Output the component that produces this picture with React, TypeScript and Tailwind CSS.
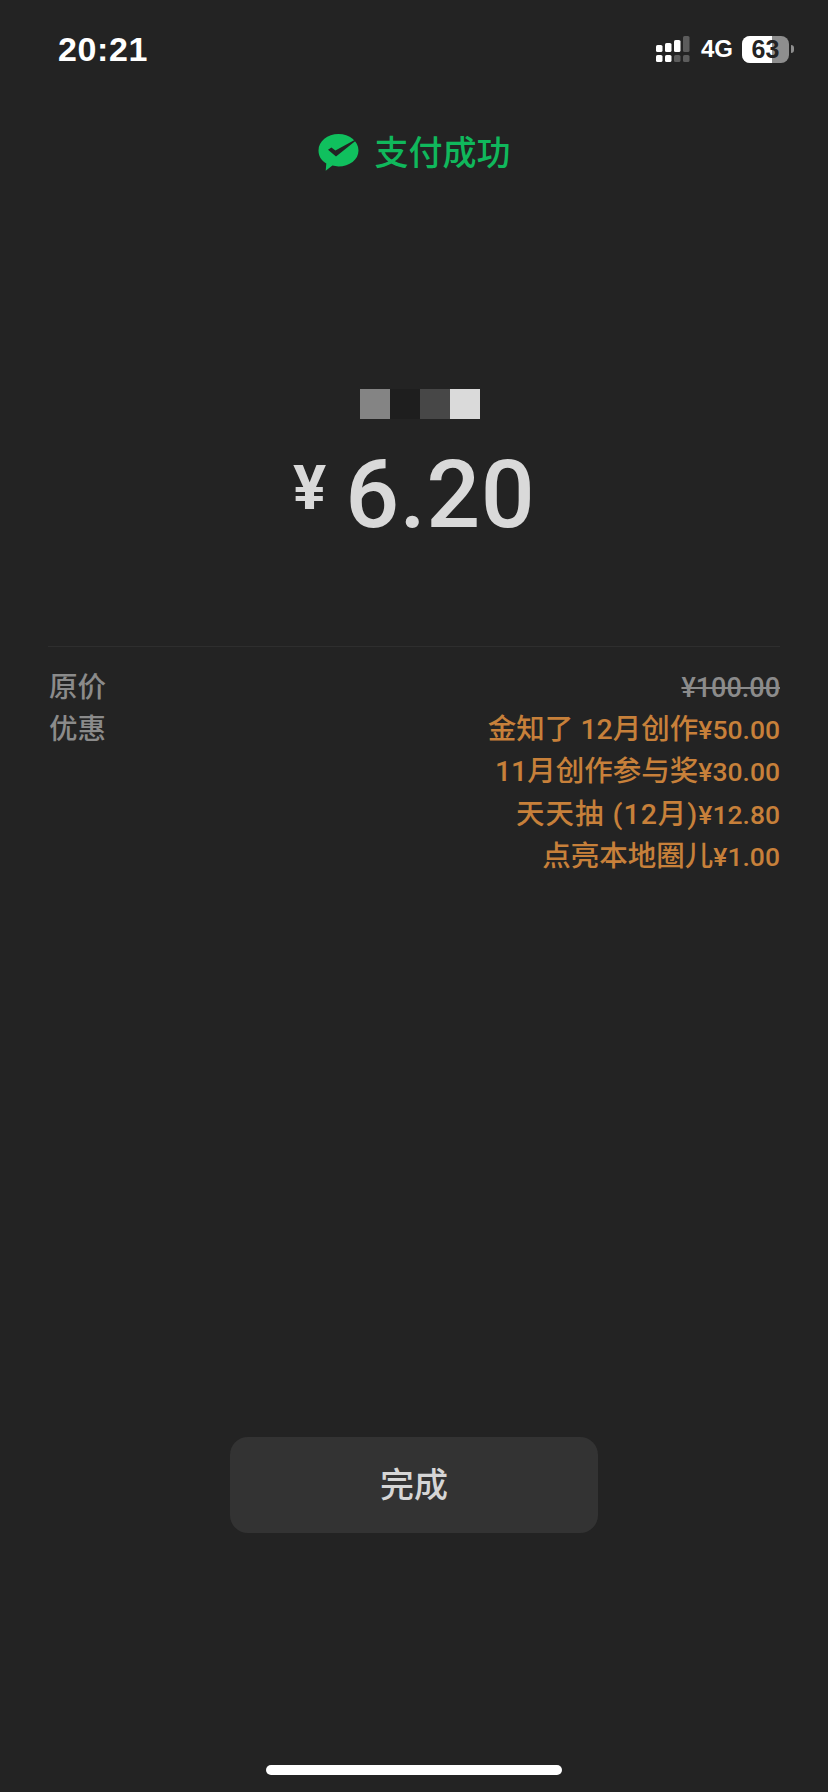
const cjk = "font-['Roboto','Noto_Sans_CJK_SC',sans-serif]";

const discounts = [
  { label: '金知了 12月创作', price: '¥50.00', labelClass: '' },
  { label: '11月创作参与奖', price: '¥30.00', labelClass: '' },
  { label: '天天抽 (12月)', price: '¥12.80', labelClass: 'tracking-[1px]' },
  { label: '点亮本地圈儿', price: '¥1.00', labelClass: '' },
];

function SignalIcon() {
  return (
    <svg width="34" height="26" viewBox="0 0 34 26" fill="none">
      <rect x="0" y="9" width="6.5" height="7" rx="1.6" fill="#fff" />
      <rect x="9" y="7" width="6.5" height="9" rx="1.6" fill="#fff" />
      <rect x="18" y="4" width="6.5" height="12" rx="1.6" fill="#fff" />
      <rect x="27" y="0" width="6.5" height="16" rx="1.6" fill="#5c5c5c" />
      <rect x="0" y="19" width="6.5" height="7" rx="1.6" fill="#fff" />
      <rect x="9" y="19" width="6.5" height="7" rx="1.6" fill="#fff" />
      <rect x="18" y="19" width="6.5" height="7" rx="1.6" fill="#5c5c5c" />
      <rect x="27" y="19" width="6.5" height="7" rx="1.6" fill="#5c5c5c" />
    </svg>
  );
}

function Battery() {
  return (
    <div className="flex items-center">
      <div className="relative flex h-[27px] w-[47px] items-center justify-center overflow-hidden rounded-[8px] bg-[#8e8e8e]">
        <div className="absolute inset-y-0 left-0 w-[30px] bg-white" />
        <span className="relative text-[25px] leading-none font-bold text-[#232323]">63</span>
      </div>
      <div className="ml-[2px] h-[8px] w-[3px] rounded-r-full bg-[#8e8e8e]" />
    </div>
  );
}

// wechat pay style bubble with tick
function PayLogo() {
  return (
    <svg width="41" height="37" viewBox="0 0 41 37">
      <path
        d="M20.5 0C31.5 0 40.5 7.2 40.5 16.4C40.5 25.6 31.5 32.4 20.5 32.4C18.3 32.4 16.3 32.1 14.4 31.6L7.7 36.8L8.3 29.4C3.2 26.4 0.5 21.8 0.5 16.4C0.5 7.2 9.5 0 20.5 0Z"
        fill="#10c05e"
      />
      <path
        d="M10 15.8L13.4 13.6L17.4 16.6L36.6 6L37.4 7L18 22.5Z"
        fill="#232323"
      />
    </svg>
  );
}

export default function App() {
  return (
    <div className={`flex h-[1792px] w-[828px] flex-col overflow-hidden bg-[#232323] font-['Liberation_Sans','Noto_Sans_CJK_SC',sans-serif]`}>
      {/* status bar */}
      <div className="mt-[31px] flex h-[36px] items-center justify-between pr-[34px] pl-[58px] text-white">
        <span className="text-[34px] leading-none font-bold tracking-[0.6px]">20:21</span>
        <div className="flex items-center">
          <SignalIcon />
          <span className="ml-[11px] text-[24px] leading-none font-bold">4G</span>
          <div className="ml-[9px]">
            <Battery />
          </div>
        </div>
      </div>

      {/* title */}
      <div className="mt-[67px] flex h-[37px] items-center justify-center gap-[16px]">
        <PayLogo />
        <span className="text-[34px] leading-none font-medium text-[#10b85c]">支付成功</span>
      </div>

      {/* blurred payee */}
      <div className="mt-[218px] ml-[12px] flex justify-center">
        <div className="h-[30px] w-[30px] bg-[#848484]" />
        <div className="h-[30px] w-[30px] bg-[#1e1e1e]" />
        <div className="h-[30px] w-[30px] bg-[#474747]" />
        <div className="h-[30px] w-[30px] bg-[#dadada]" />
      </div>

      {/* amount */}
      <div className="mt-[30px] flex h-[90px] items-start justify-center font-['Roboto',sans-serif] text-[#d9d9d9]">
        <span className="mt-[8px] text-[62px] leading-none font-bold">¥</span>
        <span className="-mt-[2px] ml-[19px] text-[95px] leading-none font-medium tracking-[0.4px]">6.20</span>
      </div>

      <div className="mx-[48px] mt-[107px] h-px bg-[#2e2e2e]" />

      {/* price rows */}
      <div className={`mt-[20px] mr-[48px] ml-[49px] flex justify-between text-[28.5px] leading-[42.2px] font-medium ${cjk}`}>
        <div className="flex flex-col text-[#8b8b8b]">
          <span>原价</span>
          <span>优惠</span>
        </div>
        <div className="flex flex-col items-end text-[#c7803a]">
          <span className="text-[27px] text-[#8b8b8b] line-through">¥100.00</span>
          {discounts.map((d) => (
            <span key={d.price}>
              <span className={d.labelClass}>{d.label}</span>
              <span className="text-[26.5px]">{d.price}</span>
            </span>
          ))}
        </div>
      </div>

      {/* done button */}
      <div className="mt-[559px] flex justify-center">
        <button className="flex h-[96px] w-[368px] items-center justify-center rounded-[18px] bg-[#333333] text-[34px] font-medium text-[#d6d6d6]">
          完成
        </button>
      </div>

      {/* home indicator */}
      <div className="mt-auto mb-[17px] flex justify-center">
        <div className="h-[10px] w-[296px] rounded-full bg-white" />
      </div>
    </div>
  );
}
